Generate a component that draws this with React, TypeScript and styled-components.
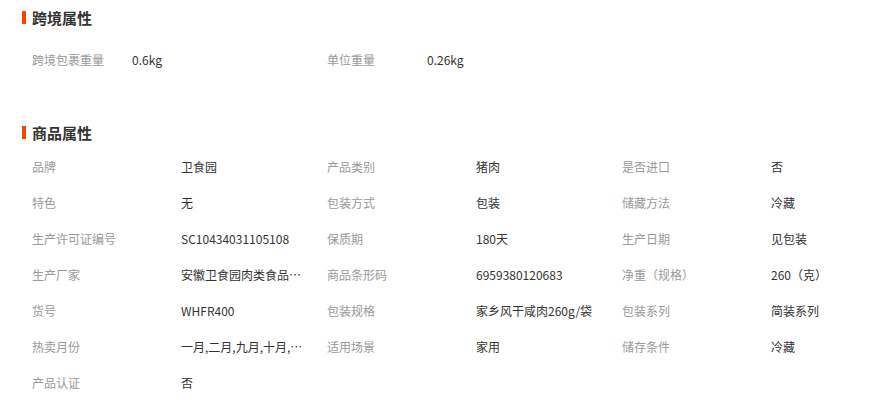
import React from "react";
import styled, { createGlobalStyle } from "styled-components";

const Global = createGlobalStyle`
  html, body { margin: 0; padding: 0; background: #fff; }
  body { font-family: "Noto Sans CJK SC", "Noto Sans", sans-serif; font-size: 12px; color: #333; }
`;

const Page = styled.div`
  width: 871px;
  overflow: hidden;
`;

const Section = styled.section<{ $gap?: number }>`
  margin-top: ${(p) => p.$gap ?? 0}px;
`;

const Title = styled.h3`
  margin: 0;
  height: 34px;
  display: flex;
  align-items: center;
  padding-left: 22px;
  gap: 6px;
  font-size: 15px;
  font-weight: bold;
  color: #333;
  &::before {
    content: "";
    width: 4px;
    height: 13px;
    background: #ff4400;
  }
`;

const Grid = styled.div<{ $top?: number }>`
  display: grid;
  grid-template-columns: 295px 295px 1fr;
  padding-left: 32px;
  margin-top: ${(p) => p.$top ?? 0}px;
`;

const Item = styled.div<{ $label: number }>`
  display: grid;
  grid-template-columns: ${(p) => p.$label}px 1fr;
  height: 36px;
  align-items: center;
  line-height: 36px;
  min-width: 0;
`;

const Label = styled.span`
  color: #999;
  white-space: nowrap;
`;

const Value = styled.span`
  color: #333;
  max-width: 122px;
  white-space: nowrap;
  overflow: hidden;
  text-overflow: ellipsis;
`;

const cross: [string, string][] = [
  ["跨境包裹重量", "0.6kg"],
  ["单位重量", "0.26kg"],
];

const props: [string, string][] = [
  ["品牌", "卫食园"],
  ["产品类别", "猪肉"],
  ["是否进口", "否"],
  ["特色", "无"],
  ["包装方式", "包装"],
  ["储藏方法", "冷藏"],
  ["生产许可证编号", "SC10434031105108"],
  ["保质期", "180天"],
  ["生产日期", "见包装"],
  ["生产厂家", "安徽卫食园肉类食品有限公司"],
  ["商品条形码", "6959380120683"],
  ["净重（规格）", "260（克）"],
  ["货号", "WHFR400"],
  ["包装规格", "家乡风干咸肉260g/袋"],
  ["包装系列", "简装系列"],
  ["热卖月份", "一月,二月,九月,十月,十一月,十二月"],
  ["适用场景", "家用"],
  ["储存条件", "冷藏"],
  ["产品认证", "否"],
];

export default function App() {
  return (
    <Page>
      <Global />
      <Section>
        <Title>跨境属性</Title>
        <Grid $top={8}>
          {cross.map(([l, v]) => (
            <Item key={l} $label={100}>
              <Label>{l}</Label>
              <Value>{v}</Value>
            </Item>
          ))}
        </Grid>
      </Section>
      <Section $gap={37}>
        <Title>商品属性</Title>
        <Grid>
          {props.map(([l, v]) => (
            <Item key={l} $label={149}>
              <Label>{l}</Label>
              <Value>{v}</Value>
            </Item>
          ))}
        </Grid>
      </Section>
    </Page>
  );
}
